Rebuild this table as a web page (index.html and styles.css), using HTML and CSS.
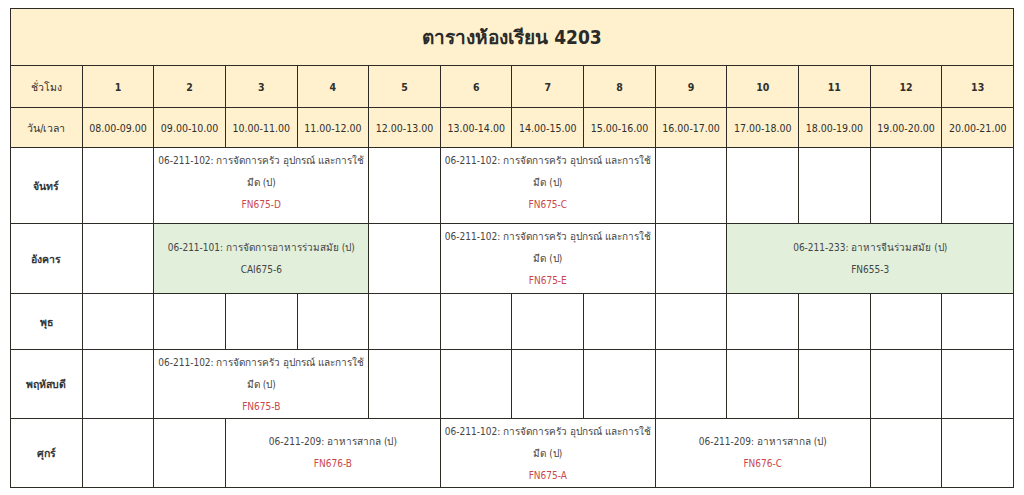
FILE: index.html
```html
<!DOCTYPE html>
<html lang="th">
<head>
<meta charset="utf-8">
<title>ตารางห้องเรียน 4203</title>
<link rel="stylesheet" href="styles.css">
</head>
<body>
<table class="timetable">
  <colgroup>
    <col><col><col><col><col><col><col><col><col><col><col><col><col><col>
  </colgroup>
  <tr class="row-title">
    <th colspan="14" class="title">ตารางห้องเรียน 4203</th>
  </tr>
  <tr class="row-hours head">
    <td>ชั่วโมง</td>
    <td class="num">1</td><td class="num">2</td><td class="num">3</td><td class="num">4</td><td class="num">5</td><td class="num">6</td><td class="num">7</td><td class="num">8</td><td class="num">9</td><td class="num">10</td><td class="num">11</td><td class="num">12</td><td class="num">13</td>
  </tr>
  <tr class="row-times head">
    <td>วัน/เวลา</td>
    <td>08.00-09.00</td><td>09.00-10.00</td><td>10.00-11.00</td><td>11.00-12.00</td><td>12.00-13.00</td><td>13.00-14.00</td><td>14.00-15.00</td><td>15.00-16.00</td><td>16.00-17.00</td><td>17.00-18.00</td><td>18.00-19.00</td><td>19.00-20.00</td><td>20.00-21.00</td>
  </tr>
  <tr class="row-mon">
    <td class="day">จันทร์</td>
    <td></td>
    <td colspan="3" class="course top"><div class="name"><span class="line">06-211-102: การจัดการครัว อุปกรณ์ และการใช้</span><br>มีด (ป)</div><div class="room">FN675-D</div></td>
    <td></td>
    <td colspan="3" class="course top"><div class="name"><span class="line">06-211-102: การจัดการครัว อุปกรณ์ และการใช้</span><br>มีด (ป)</div><div class="room">FN675-C</div></td>
    <td></td><td></td><td></td><td></td><td></td>
  </tr>
  <tr class="row-tue">
    <td class="day">อังคาร</td>
    <td></td>
    <td colspan="3" class="course green"><div class="name"><span class="line">06-211-101: การจัดการอาหารร่วมสมัย (ป)</span></div><div class="plain">CAI675-6</div></td>
    <td></td>
    <td colspan="3" class="course top"><div class="name"><span class="line">06-211-102: การจัดการครัว อุปกรณ์ และการใช้</span><br>มีด (ป)</div><div class="room">FN675-E</div></td>
    <td></td>
    <td colspan="4" class="course green"><div class="name">06-211-233: อาหารจีนร่วมสมัย (ป)</div><div class="plain">FN655-3</div></td>
  </tr>
  <tr class="row-wed">
    <td class="day">พุธ</td>
    <td></td><td></td><td></td><td></td><td></td><td></td><td></td><td></td><td></td><td></td><td></td><td></td><td></td>
  </tr>
  <tr class="row-thu">
    <td class="day">พฤหัสบดี</td>
    <td></td>
    <td colspan="3" class="course top"><div class="name"><span class="line">06-211-102: การจัดการครัว อุปกรณ์ และการใช้</span><br>มีด (ป)</div><div class="room">FN675-B</div></td>
    <td></td><td></td><td></td><td></td><td></td><td></td><td></td><td></td><td></td>
  </tr>
  <tr class="row-fri">
    <td class="day">ศุกร์</td>
    <td></td><td></td>
    <td colspan="3" class="course"><div class="name">06-211-209: อาหารสากล (ป)</div><div class="room">FN676-B</div></td>
    <td colspan="3" class="course top"><div class="name"><span class="line">06-211-102: การจัดการครัว อุปกรณ์ และการใช้</span><br>มีด (ป)</div><div class="room">FN675-A</div></td>
    <td colspan="3" class="course"><div class="name">06-211-209: อาหารสากล (ป)</div><div class="room">FN676-C</div></td>
    <td></td><td></td>
  </tr>
</table>
</body>
</html>
```

FILE: styles.css
```css
html, body {
  margin: 0;
  padding: 0;
  background: #ffffff;
}

body {
  padding: 8px 10px;
  font-family: "DejaVu Sans Condensed", "DejaVu Sans", sans-serif;
  font-stretch: condensed;
  color: #333333;
}

.timetable {
  width: 1004px;
  border-collapse: collapse;
  table-layout: fixed;
  font-size: 10.5px;
}

.timetable td,
.timetable th {
  border: 1px solid #2e2b26;
  text-align: center;
  vertical-align: middle;
  padding: 0 4px;
  line-height: 22px;
}

.title {
  height: 56px;
  background: #fff1cd;
  font-size: 19px;
  font-weight: bold;
  color: #2a2a2a;
}

.head td {
  background: #fff1cd;
  color: #2f2f2f;
}

.row-hours td {
  height: 41px;
}

.row-hours .num {
  font-weight: bold;
}

.row-times td {
  height: 39px;
}

.day {
  font-weight: bold;
  color: #333333;
}

.row-mon td { height: 73px; }
.row-tue td { height: 67px; }
.row-wed td { height: 55px; }
.row-thu td { height: 65px; }
.row-fri td { height: 65px; }

.timetable td.course {
  color: #454545;
  font-size: 10px;
  padding: 0 1px;
}

.timetable td.course.top {
  vertical-align: top;
  padding-top: 2px;
}

.course .line {
  white-space: nowrap;
}

.room {
  color: #c9474b;
}

.green {
  background: #e2efdb;
}
```
